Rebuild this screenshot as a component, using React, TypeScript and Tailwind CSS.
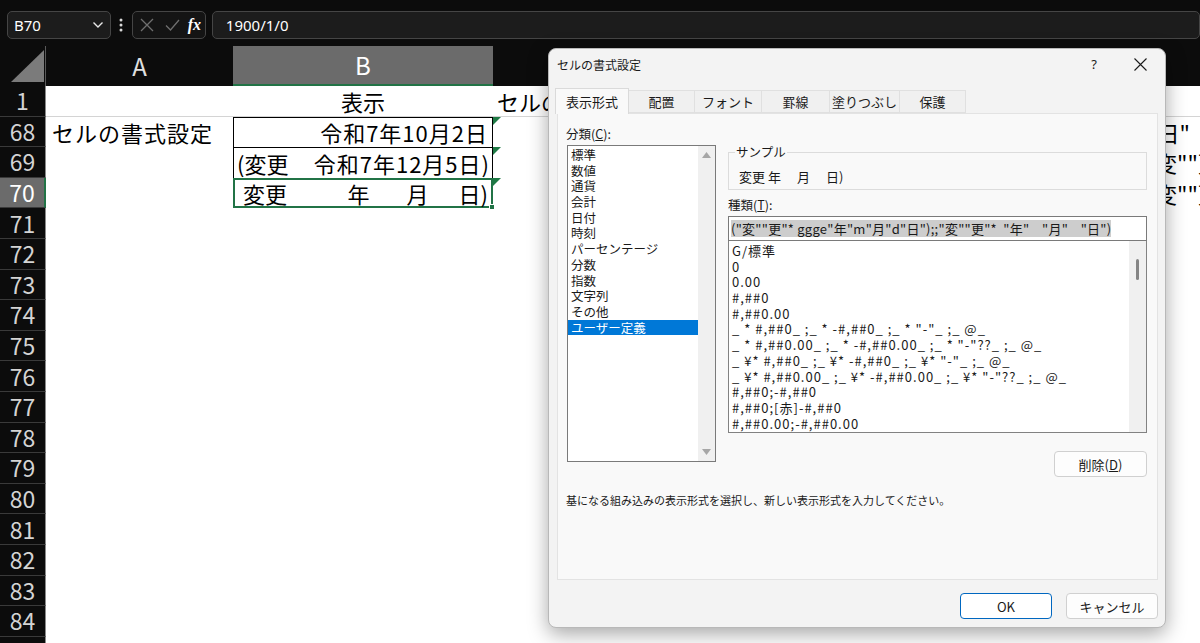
import React from "react";

const CATS = ["標準", "数値", "通貨", "会計", "日付", "時刻", "パーセンテージ", "分数", "指数", "文字列", "その他", "ユーザー定義"];
const FMTS = [
  "G/標準",
  "0",
  "0.00",
  "#,##0",
  "#,##0.00",
  '_ * #,##0_ ;_ * -#,##0_ ;_ * "-"_ ;_ @_',
  '_ * #,##0.00_ ;_ * -#,##0.00_ ;_ * "-"??_ ;_ @_',
  '_ ¥* #,##0_ ;_ ¥* -#,##0_ ;_ ¥* "-"_ ;_ @_',
  '_ ¥* #,##0.00_ ;_ ¥* -#,##0.00_ ;_ ¥* "-"??_ ;_ @_',
  "#,##0;-#,##0",
  "#,##0;[赤]-#,##0",
  "#,##0.00;-#,##0.00",
];
const LOWER = [71, 72, 73, 74, 75, 76, 77, 78, 79, 80, 81, 82, 83, 84, 85];

function RowHeader({ label, active = false }: { label: string; active?: boolean }) {
  return (
    <div
      className={
        active
          ? "w-[46px] h-full shrink-0 flex items-center justify-center bg-[#6b6b6b] text-white border-r-2 border-r-[#217346] border-b border-b-[#3a3a3a]"
          : "w-[46px] h-full shrink-0 flex items-center justify-center bg-[#0c0c0c] text-[#d4d4d4] border-r border-r-[#8a8a8a] border-b border-b-[#3a3a3a]"
      }
    >
      <span className="text-[23px] leading-none">{label}</span>
    </div>
  );
}

function Tri() {
  return <div className="absolute left-0 top-0 w-0 h-0 border-t-[8px] border-t-[#1e7a45] border-r-[8px] border-r-transparent" />;
}

export default function App() {
  return (
    <div className="relative w-[1200px] h-[643px] overflow-hidden bg-[#0c0c0c] font-['Noto_Sans_CJK_JP','Noto_Sans',sans-serif]">
      {/* formula bar */}
      <div className="h-[46px] pt-[11px] flex items-start">
        <div className="ml-[7px] w-[105px] h-[28px] rounded-[5px] border border-[#454545] bg-[#1c1c1c] flex items-center justify-between pl-[6px] pr-[6px]">
          <span className="text-[15px] text-white font-['Noto_Sans',sans-serif] leading-none">B70</span>
          <svg width="12" height="8" viewBox="0 0 12 8">
            <path d="M1.5 1.5 L6 6 L10.5 1.5" fill="none" stroke="#e8e8e8" strokeWidth="1.4" />
          </svg>
        </div>
        <div className="w-[21px] h-[28px] flex items-center justify-center">
          <svg width="4" height="14" viewBox="0 0 4 14">
            <circle cx="2" cy="2" r="1.5" fill="#d8d8d8" />
            <circle cx="2" cy="7" r="1.5" fill="#d8d8d8" />
            <circle cx="2" cy="12" r="1.5" fill="#d8d8d8" />
          </svg>
        </div>
        <div className="w-[75px] h-[28px] rounded-[5px] border border-[#454545] bg-[#141414] flex items-center pl-[7px]">
          <svg width="14" height="14" viewBox="0 0 14 14">
            <path d="M1 1 L13 13 M13 1 L1 13" stroke="#6f6f6f" strokeWidth="1.3" />
          </svg>
          <svg className="ml-[11px]" width="15" height="12" viewBox="0 0 15 12">
            <path d="M1 6.5 L5.5 11 L14 1" fill="none" stroke="#6f6f6f" strokeWidth="1.3" />
          </svg>
          <span className="ml-[8px] text-[16px] italic font-bold text-white font-['Liberation_Serif',serif] leading-none">fx</span>
        </div>
        <div className="ml-[6px] w-[1000px] h-[28px] rounded-[5px] border border-[#454545] bg-[#1c1c1c] flex items-center pl-[13px]">
          <span className="text-[15px] text-white font-['Noto_Sans',sans-serif] leading-none">1900/1/0</span>
        </div>
      </div>

      {/* column headers */}
      <div className="flex h-[40px]">
        <div className="w-[46px] h-full shrink-0 border-r border-r-[#5a5a5a]">
          <svg width="45" height="40" viewBox="0 0 45 40">
            <polygon points="11,36 44,36 44,4" fill="#7b7b7b" />
          </svg>
        </div>
        <div className="w-[187px] h-full shrink-0 flex items-center justify-center text-[#e0e0e0] text-[24px] leading-none">A</div>
        <div className="w-[260px] h-full shrink-0 flex items-center justify-center bg-[#6b6b6b] border-b-2 border-b-[#217346] text-white text-[24px] leading-none">B</div>
        <div className="flex-1 h-full" />
      </div>

      {/* row 1 */}
      <div className="flex h-[30.6px]">
        <RowHeader label="1" />
        <div className="flex-1 flex bg-white border-b border-b-[#d4d4d4] text-black text-[22px] leading-none">
          <div className="w-[187px] shrink-0" />
          <div className="w-[260px] shrink-0 flex items-center justify-center">表示</div>
          <div className="flex-1 flex items-center pl-[4px] overflow-hidden whitespace-nowrap">セルの</div>
        </div>
      </div>

      {/* row 68 */}
      <div className="flex h-[30.6px]">
        <RowHeader label="68" />
        <div className="flex-1 flex bg-white text-black text-[22px] leading-none">
          <div className="w-[187px] shrink-0 flex items-center pl-[6px] tracking-[1px] whitespace-nowrap">セルの書式設定</div>
          <div className="w-[260px] shrink-0 flex items-center justify-end pr-[4px] tracking-[1px] border-x border-t border-black">令和7年10月2日</div>
          <div className="flex-1 relative overflow-hidden flex items-center justify-end pr-[10px] whitespace-nowrap">
            <Tri />
            <span>{'日"'}</span>
          </div>
        </div>
      </div>

      {/* row 69 */}
      <div className="flex h-[30.6px]">
        <RowHeader label="69" />
        <div className="flex-1 flex bg-white text-black text-[22px] leading-none">
          <div className="w-[187px] shrink-0" />
          <div className="w-[260px] shrink-0 flex items-center justify-between pl-[3px] pr-[2px] border-x border-t border-black whitespace-nowrap">
            <span>(変更</span>
            <span className="tracking-[1px]">令和7年12月5日)</span>
          </div>
          <div className="flex-1 relative overflow-hidden flex items-center whitespace-nowrap">
            <Tri />
            <span className="pl-[662px] whitespace-pre">{'変""更'}</span>
          </div>
        </div>
      </div>

      {/* row 70 */}
      <div className="flex h-[30.6px]">
        <RowHeader label="70" active />
        <div className="flex-1 flex bg-white text-black text-[22px] leading-none">
          <div className="w-[187px] shrink-0" />
          <div className="relative w-[260px] shrink-0 flex items-center justify-between pl-[8px] pr-[3px] border-2 border-[#217346] whitespace-nowrap">
            <span>変更</span>
            <span className="flex">
              <span>年</span>
              <span className="ml-[37px]">月</span>
              <span className="ml-[30px]">日)</span>
            </span>
            <div className="absolute -right-[4px] -bottom-[4px] w-[6px] h-[6px] bg-[#217346] border border-white" />
          </div>
          <div className="flex-1 relative overflow-hidden flex items-center whitespace-nowrap">
            <Tri />
            <span className="pl-[662px] whitespace-pre">{'変""更'}</span>
          </div>
        </div>
      </div>

      {LOWER.map((n) => (
        <div key={n} className="flex h-[30.6px]">
          <RowHeader label={String(n)} />
          <div className="flex-1 bg-white" />
        </div>
      ))}

      {/* dialog */}
      <div className="absolute left-[548px] top-[48px] w-[618px] h-[580px] rounded-[8px] bg-[#f3f3f3] border border-[#b8b8b8] shadow-[0_6px_20px_rgba(0,0,0,0.35)] text-[#1a1a1a]">
        <div className="h-[31px] flex items-center">
          <div className="flex-1 pl-[8px] text-[12px] leading-none">セルの書式設定</div>
          <div className="w-[46px] h-[31px] flex items-center justify-center text-[13px] font-['Noto_Sans',sans-serif]">?</div>
          <div className="w-[46px] h-[31px] mr-[2px] flex items-center justify-center">
            <svg width="13" height="13" viewBox="0 0 13 13">
              <path d="M0.5 0.5 L12.5 12.5 M12.5 0.5 L0.5 12.5" stroke="#1a1a1a" strokeWidth="1.1" />
            </svg>
          </div>
        </div>

        {/* tabs */}
        <div className="mt-[8px] h-[25px] flex items-end pl-[6px] text-[13px] leading-none">
          <div className="relative z-10 w-[74px] h-[26px] -mb-px bg-[#f9f9f9] border border-b-0 border-[#dadada] flex items-center justify-center">表示形式</div>
          <div className="w-[66px] h-[23px] bg-[#f0f0f0] border border-l-0 border-[#e0e0e0] flex items-center justify-center">配置</div>
          <div className="w-[67px] h-[23px] bg-[#f0f0f0] border border-l-0 border-[#e0e0e0] flex items-center justify-center">フォント</div>
          <div className="w-[68px] h-[23px] bg-[#f0f0f0] border border-l-0 border-[#e0e0e0] flex items-center justify-center">罫線</div>
          <div className="w-[70px] h-[23px] bg-[#f0f0f0] border border-l-0 border-[#e0e0e0] flex items-center justify-center">塗りつぶし</div>
          <div className="w-[66px] h-[23px] bg-[#f0f0f0] border border-l-0 border-[#e0e0e0] flex items-center justify-center">保護</div>
        </div>

        {/* panel */}
        <div className="ml-[8px] w-[601px] h-[467px] border border-[#e3e3e3] bg-[#f9f9f9]">
          <div className="pt-[12px] pl-[8px] flex">
            <div className="w-[150px] shrink-0">
              <div className="h-[16px] leading-[16px] text-[12.5px]">
                分類(<span className="underline">C</span>):
              </div>
              <div className="mt-[3px] ml-[1px] w-[149px] h-[317px] border border-[#7a7a7a] bg-white flex">
                <div className="flex-1 pt-[1px] text-[12.5px]">
                  {CATS.map((c) => (
                    <div
                      key={c}
                      className={
                        c === "ユーザー定義"
                          ? "h-[15.7px] leading-[15.7px] pl-[3px] bg-[#0078d7] text-white whitespace-nowrap"
                          : "h-[15.7px] leading-[15.7px] pl-[3px] whitespace-nowrap"
                      }
                    >
                      {c}
                    </div>
                  ))}
                </div>
                <div className="w-[17px] h-full bg-[#f0f0f0] flex flex-col items-center justify-between py-[6px]">
                  <svg width="9" height="6" viewBox="0 0 9 6">
                    <polygon points="4.5,0 9,6 0,6" fill="#a6a6a6" />
                  </svg>
                  <svg width="9" height="6" viewBox="0 0 9 6">
                    <polygon points="0,0 9,0 4.5,6" fill="#a6a6a6" />
                  </svg>
                </div>
              </div>
            </div>

            <div className="ml-[12px] w-[419px] flex flex-col">
              <fieldset className="mt-[18px] h-[46px] border border-[#dcdcdc] pl-[6px]">
                <legend className="px-[1px] text-[12.5px] leading-[16px]">サンプル</legend>
                <div className="mt-[9px] pl-[4px] h-[16px] leading-[16px] text-[13px] flex whitespace-nowrap">
                  <span>変更 年</span>
                  <span className="ml-[16px]">月</span>
                  <span className="ml-[16px]">日)</span>
                </div>
              </fieldset>
              <div className="mt-[7px] h-[16px] leading-[16px] text-[12.5px]">
                種類(<span className="underline">T</span>):
              </div>
              <div className="mt-[3px] h-[25px] border border-[#7a7a7a] bg-white flex items-center pl-[2px] overflow-hidden">
                <span className="bg-[#cdcdcd] text-[13px] leading-[17px] tracking-[0.25px] whitespace-pre">{'("変""更"* ggge"年"m"月"d"日");;"変""更"*  "年"    "月"    "日")'}</span>
              </div>
              <div className="h-[192px] border border-t-0 border-[#828282] bg-white flex">
                <div className="flex-1 pt-[2px] pl-[3px] text-[13px] tracking-[1px] overflow-hidden">
                  {FMTS.map((f) => (
                    <div key={f} className="h-[15.7px] leading-[15.7px] whitespace-pre">
                      {f}
                    </div>
                  ))}
                </div>
                <div className="w-[17px] h-full bg-[#f0f0f0] pt-[18px]">
                  <div className="mx-auto w-[3px] h-[21px] rounded-full bg-[#858585]" />
                </div>
              </div>
              <div className="mt-[18px] self-end w-[93px] h-[26px] border border-[#d0d0d0] rounded-[4px] bg-[#fdfdfd] flex items-center justify-center text-[13px] leading-none">
                削除(<span className="underline">D</span>)
              </div>
            </div>
          </div>
          <div className="mt-[15px] pl-[8px] h-[16px] leading-[16px] text-[11px] whitespace-nowrap">
            基になる組み込みの表示形式を選択し、新しい表示形式を入力してください。
          </div>
        </div>

        {/* footer */}
        <div className="mt-[13px] flex justify-end gap-[14px] pr-[7px] text-[13px] leading-none">
          <div className="w-[92px] h-[26px] border border-[#0067c0] rounded-[4px] bg-white flex items-center justify-center">OK</div>
          <div className="w-[92px] h-[26px] border border-[#d0d0d0] rounded-[4px] bg-[#fdfdfd] flex items-center justify-center">キャンセル</div>
        </div>
      </div>
    </div>
  );
}
